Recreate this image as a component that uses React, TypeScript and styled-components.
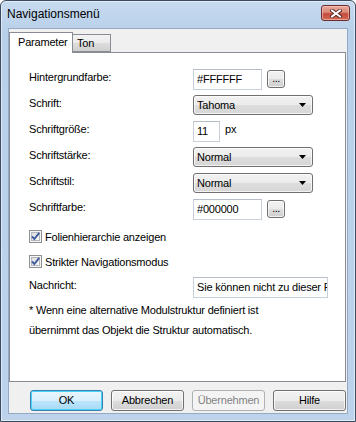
import React from "react";
import styled, { createGlobalStyle } from "styled-components";

const GlobalStyle = createGlobalStyle`
  html, body { margin: 0; padding: 0; background: #ffffff; }
  body {
    font-family: "Liberation Sans", Arial, sans-serif;
    font-size: 11px;
    color: #000;
  }
  * { box-sizing: border-box; }
`;

const Window = styled.div`
  width: 356px;
  height: 422px;
  border: 1px solid #3b4b61;
  border-radius: 6px 6px 0 0;
  background: linear-gradient(to bottom, #c7dbf0 0px, #b9d0ea 30px, #bdd3eb 100%);
  box-shadow: inset 0 0 0 1px rgba(255, 255, 255, 0.55);
  display: flex;
  flex-direction: column;
  overflow: hidden;
`;

const TitleBar = styled.div`
  height: 27px;
  flex: none;
  display: flex;
  align-items: flex-start;
  justify-content: space-between;
  padding: 0 5px 0 6px;
`;

const Title = styled.span`
  font-family: "Liberation Sans", Arial, sans-serif;
  font-size: 12px;
  line-height: 14px;
  margin-top: 6px;
  color: #000;
`;

const CloseButton = styled.div`
  margin-top: 4px;
  width: 29px;
  height: 16px;
  border: 1px solid #6e2d2a;
  border-radius: 3px;
  background: linear-gradient(to bottom, #e9a99c 0%, #d98877 45%, #c44a3c 55%, #cf6a55 100%);
  box-shadow: inset 0 0 0 1px rgba(255, 210, 200, 0.55);
  display: flex;
  align-items: center;
  justify-content: center;
`;

const Client = styled.div`
  flex: 1;
  margin: 0 7px 7px 7px;
  border: 1px solid #93a9c4;
  background: #f0f0f0;
  display: flex;
  flex-direction: column;
  padding: 3px 1px 0 0;
`;

const TabStrip = styled.div`
  display: flex;
  align-items: flex-end;
  height: 20px;
  position: relative;
  z-index: 1;
`;

const Tab = styled.div<{ $active?: boolean }>`
  border: 1px solid #898c95;
  border-bottom: ${(p) => (p.$active ? "none" : "1px solid #898c95")};
  background: ${(p) =>
    p.$active ? "#ffffff" : "linear-gradient(to bottom, #f3f3f3 0%, #ebebeb 50%, #dddddd 51%, #cfcfcf 100%)"};
  height: ${(p) => (p.$active ? "21px" : "18px")};
  margin-bottom: ${(p) => (p.$active ? "-1px" : "0")};
  margin-left: ${(p) => (p.$active ? "0" : "-1px")};
  width: ${(p) => (p.$active ? "64px" : "39px")};
  padding: ${(p) => (p.$active ? "3px 0 0 8px" : "2px 0 0 4px")};
  line-height: 13px;
  letter-spacing: -0.2px;
  font-size: 11px;
  color: #000;
`;

const Panel = styled.div`
  flex: none;
  height: 330px;
  border: 1px solid #898c95;
  background: #ffffff;
  padding: 13px 0 0 19px;
  display: flex;
  flex-direction: column;
`;

const FieldRow = styled.div<{ $h?: number }>`
  display: flex;
  align-items: center;
  height: ${(p) => p.$h ?? 26}px;
`;

const Label = styled.span`
  flex: 0 0 164px;
  font-size: 11px;
  letter-spacing: -0.2px;
  margin-bottom: 4px;
  line-height: 13px;
`;

const TextField = styled.input<{ $w: number }>`
  width: ${(p) => p.$w}px;
  height: 21px;
  border: 1px solid #c9d0d9;
  border-top-color: #b6bcc6;
  background: #fff;
  padding: 0 0 1px 3px;
  font-family: "Liberation Sans", Arial, sans-serif;
  font-size: 11px;
  letter-spacing: -0.2px;
  color: #000;
  outline: none;
  margin: 0;
`;

const DotsButton = styled.div`
  width: 18px;
  height: 18px;
  margin-left: 5px;
  border: 1px solid #707070;
  border-radius: 3px;
  background: linear-gradient(to bottom, #f2f2f2 0%, #ebebeb 50%, #dddddd 51%, #cfcfcf 100%);
  box-shadow: inset 0 0 0 1px rgba(255, 255, 255, 0.7);
  font-size: 11px;
  line-height: 14px;
  text-align: center;
  letter-spacing: -0.5px;
`;

const Select = styled.div`
  width: 120px;
  height: 20px;
  border: 1px solid #707070;
  border-radius: 3px;
  background: linear-gradient(to bottom, #f2f2f2 0%, #ebebeb 50%, #dddddd 51%, #d6d6d6 100%);
  box-shadow: inset 0 0 0 1px rgba(255, 255, 255, 0.7);
  display: flex;
  align-items: center;
  justify-content: space-between;
  padding: 0 6px 1px 3px;
  font-size: 11px;
  letter-spacing: -0.2px;
`;

const Unit = styled.span`
  margin-left: 5px;
  margin-bottom: 4px;
  font-size: 11px;
  letter-spacing: -0.2px;
`;

const CheckRow = styled.label<{ $first?: boolean }>`
  display: flex;
  align-items: center;
  gap: 3px;
  height: 25px;
  margin-top: ${(p) => (p.$first ? "2px" : "0")};
  font-size: 11px;
  letter-spacing: -0.2px;
`;

const Note = styled.p`
  margin: 1px 0 0 0;
  font-size: 11px;
  line-height: 19.5px;
  letter-spacing: -0.2px;
`;

const ButtonRow = styled.div`
  display: flex;
  justify-content: flex-end;
  gap: 8px;
  margin-top: 8px;
  padding-right: 0;
`;

const Button = styled.div<{ $default?: boolean; $disabled?: boolean }>`
  width: 73px;
  height: 21px;
  border: 1px solid ${(p) => (p.$default ? "#3c7fb1" : p.$disabled ? "#adb2b5" : "#707070")};
  border-radius: 3px;
  background: ${(p) =>
    p.$disabled
      ? "#f4f4f4"
      : p.$default
      ? "linear-gradient(to bottom, #eaf6fd 0%, #d9f0fc 50%, #bee6fd 51%, #a7d9f5 100%)"
      : "linear-gradient(to bottom, #f2f2f2 0%, #ebebeb 50%, #dddddd 51%, #cfcfcf 100%)"};
  box-shadow: ${(p) =>
    p.$default ? "inset 0 0 0 1px #48d4f9" : p.$disabled ? "none" : "inset 0 0 0 1px rgba(255,255,255,0.75)"};
  color: ${(p) => (p.$disabled ? "#838383" : "#000")};
  font-size: 11px;
  letter-spacing: -0.2px;
  line-height: 18px;
  text-align: center;
`;

const Arrow = () => (
  <svg width="7" height="4" viewBox="0 0 7 4">
    <path d="M0 0 H7 L3.5 4 Z" fill="#000" />
  </svg>
);

const CheckBox = () => (
  <svg width="13" height="13" viewBox="0 0 13 13">
    <defs>
      <linearGradient id="cbg" x1="0" y1="0" x2="1" y2="1">
        <stop offset="0" stopColor="#dcdcdc" />
        <stop offset="1" stopColor="#fbfbfb" />
      </linearGradient>
    </defs>
    <rect x="0.5" y="0.5" width="12" height="12" fill="#f6f6f6" stroke="#8e8f8f" />
    <rect x="2.5" y="2.5" width="8" height="8" fill="url(#cbg)" stroke="#b4b8bd" />
    <path d="M3 6.3 L5.3 9 L10.2 2.8" fill="none" stroke="#3f5b9d" strokeWidth="1.9" />
  </svg>
);

const CloseGlyph = () => (
  <svg width="12" height="9" viewBox="0 0 12 9">
    <path d="M2 1.5 L10 7.5 M10 1.5 L2 7.5" stroke="#4a1d1a" strokeWidth="3.6" strokeLinecap="square" />
    <path d="M2 1.5 L10 7.5 M10 1.5 L2 7.5" stroke="#ffffff" strokeWidth="2" strokeLinecap="square" />
  </svg>
);

export default function App() {
  return (
    <>
      <GlobalStyle />
      <Window>
        <TitleBar>
          <Title>Navigationsmenü</Title>
          <CloseButton>
            <CloseGlyph />
          </CloseButton>
        </TitleBar>
        <Client>
          <TabStrip>
            <Tab $active>Parameter</Tab>
            <Tab>Ton</Tab>
          </TabStrip>
          <Panel>
            <FieldRow>
              <Label>Hintergrundfarbe:</Label>
              <TextField $w={69} readOnly defaultValue="#FFFFFF" />
              <DotsButton>...</DotsButton>
            </FieldRow>
            <FieldRow>
              <Label>Schrift:</Label>
              <Select>
                <span>Tahoma</span>
                <Arrow />
              </Select>
            </FieldRow>
            <FieldRow>
              <Label>Schriftgröße:</Label>
              <TextField $w={27} readOnly defaultValue="11" />
              <Unit>px</Unit>
            </FieldRow>
            <FieldRow>
              <Label>Schriftstärke:</Label>
              <Select>
                <span>Normal</span>
                <Arrow />
              </Select>
            </FieldRow>
            <FieldRow>
              <Label>Schriftstil:</Label>
              <Select>
                <span>Normal</span>
                <Arrow />
              </Select>
            </FieldRow>
            <FieldRow>
              <Label>Schriftfarbe:</Label>
              <TextField $w={69} readOnly defaultValue="#000000" />
              <DotsButton>...</DotsButton>
            </FieldRow>
            <CheckRow $first>
              <CheckBox />
              <span>Folienhierarchie anzeigen</span>
            </CheckRow>
            <CheckRow>
              <CheckBox />
              <span>Strikter Navigationsmodus</span>
            </CheckRow>
            <FieldRow>
              <Label>Nachricht:</Label>
              <TextField $w={135} readOnly defaultValue="Sie können nicht zu dieser Folie wechseln." />
            </FieldRow>
            <Note>
              * Wenn eine alternative Modulstruktur definiert ist
              <br />
              übernimmt das Objekt die Struktur automatisch.
            </Note>
          </Panel>
          <ButtonRow>
            <Button $default>OK</Button>
            <Button>Abbrechen</Button>
            <Button $disabled>Übernehmen</Button>
            <Button>Hilfe</Button>
          </ButtonRow>
        </Client>
      </Window>
    </>
  );
}
